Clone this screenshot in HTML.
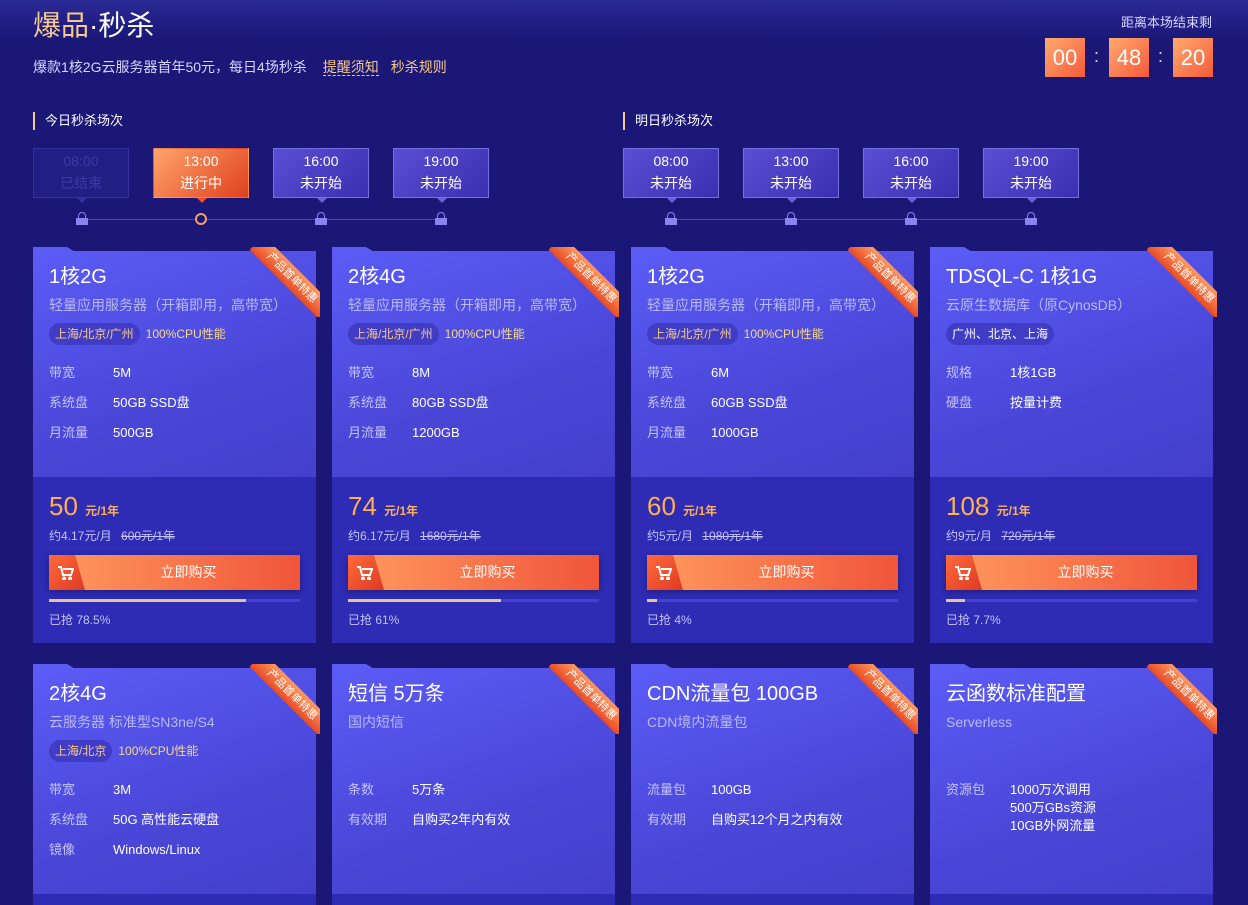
<!DOCTYPE html>
<html><head><meta charset="utf-8">
<style>
*{margin:0;padding:0;box-sizing:border-box}
html,body{width:1248px;height:905px;overflow:hidden}
body{background:#1a1777;font-family:"Liberation Sans","Noto Sans CJK SC",sans-serif;color:#fff;position:relative}
.topband{position:absolute;left:0;top:0;width:1248px;height:40px;background:linear-gradient(180deg,#2b2a96,#1a1777)}
.abs{position:absolute}
.title{left:33px;top:7px;font-size:28px;line-height:38px}
.title .a{color:#f7c98c}
.sub{left:33px;top:58px;font-size:14px;color:#d6d6ff;line-height:18px}
.sub .y{color:#f7c98c;margin-left:12px}
.sub .u{border-bottom:1px dashed #f7c98c}
.cdl{right:36px;top:12px;font-size:13px;color:#d6d6ff}
.cd{top:38px;width:40px;height:39px;background:linear-gradient(135deg,#ffaa70,#f55a3a);font-size:22px;text-align:center;line-height:39px}
.colon{top:46px;font-size:18px;color:#ddd}
.sec{top:112px;font-size:13px;border-left:2px solid #f7c98c;padding-left:10px;line-height:18px}
.slot{top:148px;width:96px;height:50px;border:1px solid #7570e0;background:linear-gradient(135deg,#5a4fd4,#3a2fb0);text-align:center;font-size:14px;line-height:22px;padding-top:1px}
.slot:after{content:"";position:absolute;left:43px;bottom:-6px;border-left:5px solid transparent;border-right:5px solid transparent;border-top:5px solid #6a64d8}
.slot.done{background:#211e84;border-color:#34319a;color:#3e3aa6}
.slot.done:after{border-top-color:#34319a}
.slot.on{background:linear-gradient(135deg,#ffa46c,#e0401e);border-color:transparent}
.slot.on:after{border-top-color:#e8502c}
.line{top:219px;height:1px;background:#4a46b8}
.lock{top:212px;width:12px;height:13px}
.lock:before{content:"";position:absolute;left:2px;top:0;width:8px;height:8px;border:1.5px solid #8a84f0;border-radius:5px 5px 0 0;box-sizing:border-box}
.lock:after{content:"";position:absolute;left:0;top:6px;width:12px;height:7px;background:#8a84f0}
.ring{top:213px;width:12px;height:12px;border:2px solid #f5a060;border-radius:50%;background:#1a1777}
.card{width:283px;height:392px;background:#2e2bb4}
.card.r2{height:237px}
.card .tab{position:absolute;left:0;top:-4px;width:44px;height:6px;background:#5a5cf4;clip-path:polygon(0 0,34px 0,44px 6px,0 6px)}
.card .top{position:absolute;left:0;top:0;width:283px;height:226px;background:linear-gradient(160deg,#5b5cf6,#4a47d8 60%,#4440cc)}
.card h3{position:absolute;left:16px;top:13px;font-size:20px;font-weight:normal;line-height:26px}
.card .ds{position:absolute;left:16px;top:45px;font-size:14px;color:#b9b8f4;line-height:18px}
.card .tags{position:absolute;left:16px;top:72px;font-size:12px;line-height:22px}
.tags .p{display:inline-block;background:#403cc6;border-radius:11px;padding:0 6px;color:#f7c98c}
.tags .y{color:#f7d98c;margin-left:6px}
.card .sp{position:absolute;left:16px;font-size:13px;color:#c4c3f6;line-height:18px}
.card .sv{position:absolute;left:80px;font-size:13px;color:#fff;line-height:18px}
.price{position:absolute;left:16px;top:240px;color:#ffb054;font-size:26px}
.price small{font-size:12px;font-weight:bold}
.per{position:absolute;left:16px;top:276px;font-size:12px;color:#c4c3f6}
.per s{margin-left:6px}
.btn{position:absolute;left:16px;top:304px;width:251px;height:35px;background:linear-gradient(90deg,#ff9a5e,#f0553a);box-shadow:0 2px 6px rgba(0,0,0,.3);text-align:center;line-height:35px;font-size:14px;padding-left:28px}
.btn .l{position:absolute;left:0;top:0;width:36px;height:35px;background:linear-gradient(135deg,#ff6a3c,#dd3a22);clip-path:polygon(0 0,26px 0,36px 35px,0 35px)}
.btn svg{position:absolute;left:9px;top:11px}
.bar{position:absolute;left:16px;top:348px;width:251px;height:3px;background:#4640d0}
.bar i{display:block;height:3px;background:#e7c29b}
.got{position:absolute;left:16px;top:360px;font-size:12px;color:#c4c3f6}
.rib{position:absolute;right:-4px;top:-4px;width:80px;height:70px;overflow:hidden}
.rib div{position:absolute;left:2px;top:21px;width:100px;height:20px;transform:rotate(45deg);background:linear-gradient(180deg,#ff9a60,#e84a24);font-size:11px;text-align:center;line-height:20px;color:#fff}
</style></head><body>
<div class="topband"></div>
<div class="abs title"><span class="a">爆品</span>·秒杀</div>
<div class="abs sub">爆款1核2G云服务器首年50元，每日4场秒杀 <span class="y u">提醒须知</span><span class="y">秒杀规则</span></div>
<div class="abs cdl">距离本场结束剩</div>
<div class="abs cd" style="left:1045px">00</div><div class="abs colon" style="left:1094px">:</div>
<div class="abs cd" style="left:1109px">48</div><div class="abs colon" style="left:1158px">:</div>
<div class="abs cd" style="left:1173px">20</div>

<div class="abs sec" style="left:33px">今日秒杀场次</div>
<div class="abs sec" style="left:623px">明日秒杀场次</div>

<div class="abs line" style="left:82px;width:360px"></div>
<div class="abs line" style="left:671px;width:360px"></div>

<div class="abs slot done" style="left:33px">08:00<br>已结束</div>
<div class="abs slot on" style="left:153px">13:00<br>进行中</div>
<div class="abs slot" style="left:273px">16:00<br>未开始</div>
<div class="abs slot" style="left:393px">19:00<br>未开始</div>
<div class="abs slot" style="left:623px">08:00<br>未开始</div>
<div class="abs slot" style="left:743px">13:00<br>未开始</div>
<div class="abs slot" style="left:863px">16:00<br>未开始</div>
<div class="abs slot" style="left:983px">19:00<br>未开始</div>

<div class="abs lock" style="left:76px"></div>
<div class="abs ring" style="left:195px"></div>
<div class="abs lock" style="left:315px"></div>
<div class="abs lock" style="left:435px"></div>
<div class="abs lock" style="left:665px"></div>
<div class="abs lock" style="left:785px"></div>
<div class="abs lock" style="left:905px"></div>
<div class="abs lock" style="left:1025px"></div>

<div class="abs card" style="left:33px;top:251px"><div class="tab"></div><div class="top"></div>
<h3>1核2G</h3><div class="ds">轻量应用服务器（开箱即用，高带宽）</div>
<div class="tags"><span class="p">上海/北京/广州</span><span class="y">100%CPU性能</span></div>
<div class="sp" style="top:113px">带宽</div><div class="sv" style="top:113px">5M</div>
<div class="sp" style="top:143px">系统盘</div><div class="sv" style="top:143px">50GB SSD盘</div>
<div class="sp" style="top:173px">月流量</div><div class="sv" style="top:173px">500GB</div>
<div class="price">50 <small>元/1年</small></div><div class="per">约4.17元/月 <s>600元/1年</s></div>
<div class="btn"><div class="l"></div><svg width="16" height="14" viewBox="0 0 16 14" fill="none" stroke="#fff" stroke-width="2"><path d="M0 1h3l2 8h8l2-6H5"/><circle cx="6" cy="12.5" r="1" fill="#fff"/><circle cx="12" cy="12.5" r="1" fill="#fff"/></svg>立即购买</div>
<div class="bar"><i style="width:78.5%"></i></div><div class="got">已抢 78.5%</div>
<div class="rib"><div>产品首单特惠</div></div></div>

<div class="abs card" style="left:332px;top:251px"><div class="tab"></div><div class="top"></div>
<h3>2核4G</h3><div class="ds">轻量应用服务器（开箱即用，高带宽）</div>
<div class="tags"><span class="p">上海/北京/广州</span><span class="y">100%CPU性能</span></div>
<div class="sp" style="top:113px">带宽</div><div class="sv" style="top:113px">8M</div>
<div class="sp" style="top:143px">系统盘</div><div class="sv" style="top:143px">80GB SSD盘</div>
<div class="sp" style="top:173px">月流量</div><div class="sv" style="top:173px">1200GB</div>
<div class="price">74 <small>元/1年</small></div><div class="per">约6.17元/月 <s>1680元/1年</s></div>
<div class="btn"><div class="l"></div><svg width="16" height="14" viewBox="0 0 16 14" fill="none" stroke="#fff" stroke-width="2"><path d="M0 1h3l2 8h8l2-6H5"/><circle cx="6" cy="12.5" r="1" fill="#fff"/><circle cx="12" cy="12.5" r="1" fill="#fff"/></svg>立即购买</div>
<div class="bar"><i style="width:61%"></i></div><div class="got">已抢 61%</div>
<div class="rib"><div>产品首单特惠</div></div></div>

<div class="abs card" style="left:631px;top:251px"><div class="tab"></div><div class="top"></div>
<h3>1核2G</h3><div class="ds">轻量应用服务器（开箱即用，高带宽）</div>
<div class="tags"><span class="p">上海/北京/广州</span><span class="y">100%CPU性能</span></div>
<div class="sp" style="top:113px">带宽</div><div class="sv" style="top:113px">6M</div>
<div class="sp" style="top:143px">系统盘</div><div class="sv" style="top:143px">60GB SSD盘</div>
<div class="sp" style="top:173px">月流量</div><div class="sv" style="top:173px">1000GB</div>
<div class="price">60 <small>元/1年</small></div><div class="per">约5元/月 <s>1080元/1年</s></div>
<div class="btn"><div class="l"></div><svg width="16" height="14" viewBox="0 0 16 14" fill="none" stroke="#fff" stroke-width="2"><path d="M0 1h3l2 8h8l2-6H5"/><circle cx="6" cy="12.5" r="1" fill="#fff"/><circle cx="12" cy="12.5" r="1" fill="#fff"/></svg>立即购买</div>
<div class="bar"><i style="width:4%"></i></div><div class="got">已抢 4%</div>
<div class="rib"><div>产品首单特惠</div></div></div>

<div class="abs card" style="left:930px;top:251px"><div class="tab"></div><div class="top"></div>
<h3>TDSQL-C 1核1G</h3><div class="ds">云原生数据库（原CynosDB）</div>
<div class="tags"><span class="p" style="color:#fff">广州、北京、上海</span></div>
<div class="sp" style="top:113px">规格</div><div class="sv" style="top:113px">1核1GB</div>
<div class="sp" style="top:143px">硬盘</div><div class="sv" style="top:143px">按量计费</div>
<div class="price">108 <small>元/1年</small></div><div class="per">约9元/月 <s>720元/1年</s></div>
<div class="btn"><div class="l"></div><svg width="16" height="14" viewBox="0 0 16 14" fill="none" stroke="#fff" stroke-width="2"><path d="M0 1h3l2 8h8l2-6H5"/><circle cx="6" cy="12.5" r="1" fill="#fff"/><circle cx="12" cy="12.5" r="1" fill="#fff"/></svg>立即购买</div>
<div class="bar"><i style="width:7.7%"></i></div><div class="got">已抢 7.7%</div>
<div class="rib"><div>产品首单特惠</div></div></div>

<div class="abs card r2" style="left:33px;top:668px"><div class="tab"></div><div class="top"></div>
<h3>2核4G</h3><div class="ds">云服务器 标准型SN3ne/S4</div>
<div class="tags"><span class="p">上海/北京</span><span class="y">100%CPU性能</span></div>
<div class="sp" style="top:113px">带宽</div><div class="sv" style="top:113px">3M</div>
<div class="sp" style="top:143px">系统盘</div><div class="sv" style="top:143px">50G 高性能云硬盘</div>
<div class="sp" style="top:173px">镜像</div><div class="sv" style="top:173px">Windows/Linux</div>
<div class="rib"><div>产品首单特惠</div></div></div>

<div class="abs card r2" style="left:332px;top:668px"><div class="tab"></div><div class="top"></div>
<h3>短信 5万条</h3><div class="ds">国内短信</div>
<div class="sp" style="top:113px">条数</div><div class="sv" style="top:113px">5万条</div>
<div class="sp" style="top:143px">有效期</div><div class="sv" style="top:143px">自购买2年内有效</div>
<div class="rib"><div>产品首单特惠</div></div></div>

<div class="abs card r2" style="left:631px;top:668px"><div class="tab"></div><div class="top"></div>
<h3>CDN流量包 100GB</h3><div class="ds">CDN境内流量包</div>
<div class="sp" style="top:113px">流量包</div><div class="sv" style="top:113px">100GB</div>
<div class="sp" style="top:143px">有效期</div><div class="sv" style="top:143px">自购买12个月之内有效</div>
<div class="rib"><div>产品首单特惠</div></div></div>

<div class="abs card r2" style="left:930px;top:668px"><div class="tab"></div><div class="top"></div>
<h3>云函数标准配置</h3><div class="ds">Serverless</div>
<div class="sp" style="top:113px">资源包</div><div class="sv" style="top:113px">1000万次调用<br>500万GBs资源<br>10GB外网流量</div>
<div class="rib"><div>产品首单特惠</div></div></div>
</body></html>
